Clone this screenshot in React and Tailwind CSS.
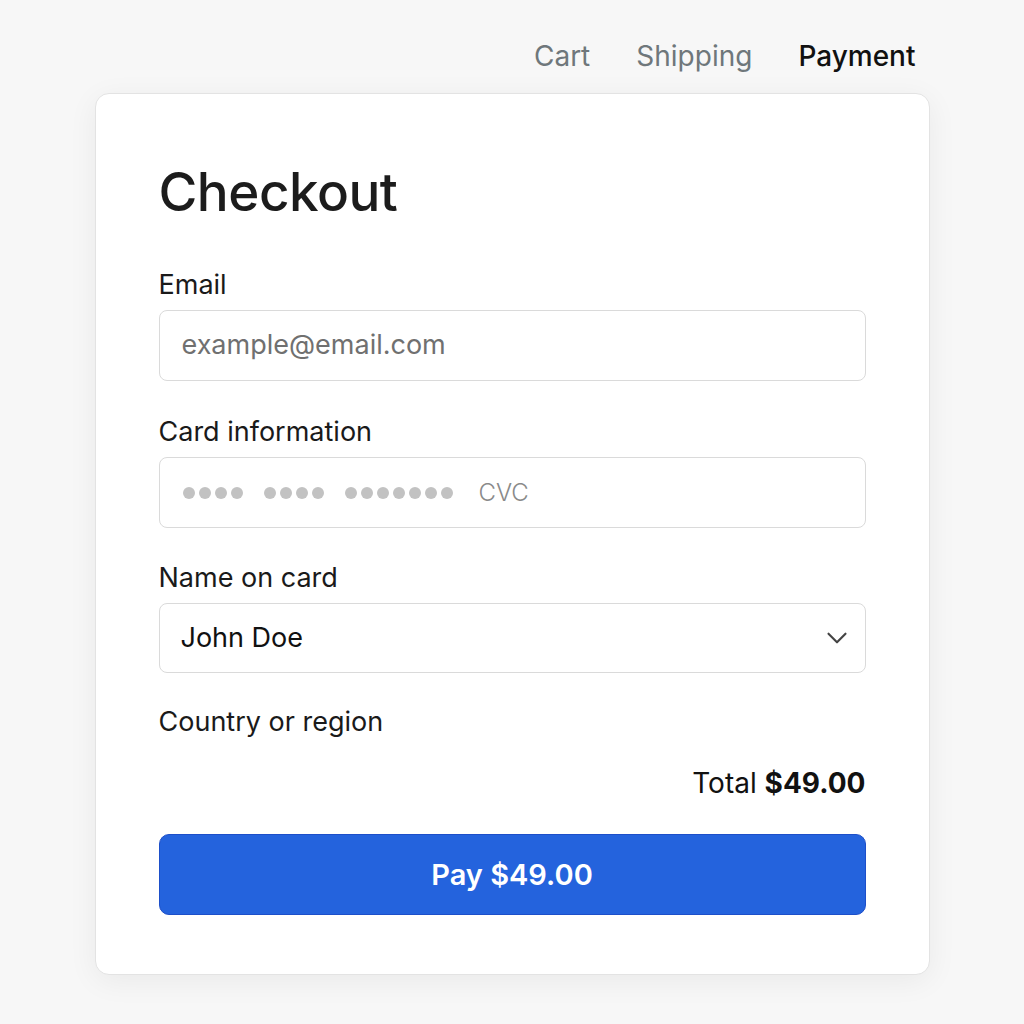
import React from 'react';
import { ChevronDown } from 'lucide-react';

function Dots({ count }) {
  return (
    <div className="flex items-center gap-1">
      {Array.from({ length: count }).map((_, i) => (
        <span key={i} className="block w-3 h-3 rounded-full bg-[#c2c2c2]" />
      ))}
    </div>
  );
}

function Label({ children, className = '' }) {
  return <div className={`text-[27px] leading-[32px] text-[#1a1a1a] ${className}`}>{children}</div>;
}

function App() {
  return (
    <div className="min-h-screen bg-[#f7f7f7] font-['Inter',sans-serif] pt-[38px]">
      <div className="w-[835px] mx-auto">
        <nav className="flex justify-end gap-[46px] pr-[14px] text-[28px] leading-[36px]">
          <span className="text-[#6f777b]">Cart</span>
          <span className="text-[#6f777b]">Shipping</span>
          <span className="text-[#111] font-medium">Payment</span>
        </nav>

        <div className="mt-[19px] bg-white border border-[#e3e3e3] rounded-[14px] shadow-[0_6px_30px_rgba(0,0,0,0.06)] px-[63px] pt-[67px] pb-[59px]">
          <h1 className="text-[53px] leading-[62px] font-medium text-[#1c1c1c] tracking-[-0.5px]">Checkout</h1>

          <Label className="mt-[46px]">Email</Label>
          <div className="mt-[9px] h-[71px] border border-[#dadada] rounded-lg flex items-center px-[22px] text-[27px] text-[#707070]">
            example@email.com
          </div>

          <Label className="mt-[35px]">Card information</Label>
          <div className="mt-[9px] h-[71px] border border-[#dadada] rounded-lg flex items-center pl-[23px] pr-[22px]">
            <Dots count={4} />
            <div className="w-[21px]" />
            <Dots count={4} />
            <div className="w-[21px]" />
            <Dots count={7} />
            <span className="ml-[26px] text-[24px] font-light text-[#8a8a8a]">CVC</span>
          </div>

          <Label className="mt-[34px]">Name on card</Label>
          <div className="mt-[9px] h-[70px] border border-[#dadada] rounded-lg flex items-center justify-between pl-[21px] pr-[11px] text-[27px] text-[#111]">
            <span>John Doe</span>
            <ChevronDown size={34} strokeWidth={1.5} className="text-[#444]" />
          </div>

          <Label className="mt-[33px]">Country or region</Label>

          <div className="mt-[27px] text-right text-[28px] leading-[36px] text-[#111]">
            Total <span className="font-bold">$49.00</span>
          </div>

          <button className="mt-[33px] w-full h-[81px] rounded-[10px] bg-[#2463dd] border border-[#1d4fc9] text-white text-[29px] font-semibold">
            Pay $49.00
          </button>
        </div>
      </div>
    </div>
  );
}

export default App;
